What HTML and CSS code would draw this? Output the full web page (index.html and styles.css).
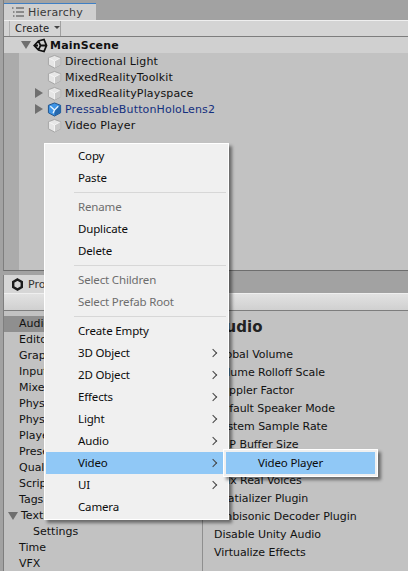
FILE: index.html
```html
<!DOCTYPE html>
<html lang="en">
<head>
    <meta charset="UTF-8">
    <title>Unity Editor Menu</title>
    <link rel="stylesheet" href="styles.css">
</head>
<body>
    <svg class="defs" width="0" height="0">
        <symbol id="cube" viewBox="0 0 16 16">
            <path d="M8 1.500 14.500 4v7.500L8 15 1.500 11.500V4z" fill="#e6e6e6" stroke="#a3a3a3"/>
            <path d="M8 7.500 14.500 4v7.500L8 15z" fill="#c9c9c9"/>
            <path d="M2.500 4.500 8 7.500 13.500 4.500M8 7.500V14" fill="none" stroke="#f4f4f4"/>
        </symbol>
        <symbol id="cube-blue" viewBox="0 0 16 16">
            <path d="M8 1 14.500 3.500v8L8 15 1.500 11.500v-8z" fill="#3f95e6" stroke="#1d4f86"/>
            <path d="M8 7.500 14.500 3.500v8L8 15z" fill="#2568ad"/>
            <path d="M3.500 4.500 8 8.500 12 4.500M8 8.500 6.500 12" fill="none" stroke="#e4f2ff" stroke-width="1.500"/>
        </symbol>
    </svg>

    <section class="panel hierarchy">
        <div class="tabs">
            <div class="tab tab-active">
                <svg class="tab-icon" width="12" height="10" viewBox="0 0 12 10">
                    <path d="M0 1h1.500M4 1h8M1 5h1.500M4 5h8M1 9h1.500M4 9h8" stroke="#444" fill="none"/>
                </svg>
                Hierarchy
            </div>
        </div>
        <div class="toolbar">
            <div class="create-btn">Create<span class="caret"></span></div>
        </div>
        <div class="scene-row">
            <span class="fold fold-open"></span>
            <svg class="unity" width="15" height="15" viewBox="0 0 15 15">
                <path d="M1.200 7.500 5.500 3 11 1.500 13.500 7.500 11 13.500 5.500 12zM1.200 7.500H5M5.500 3 7.500 7.500 5.500 12M7.500 7.500H12.500" fill="none" stroke="#111" stroke-width="1.800"/>
            </svg>
            <span>MainScene</span>
        </div>
        <div class="tree">
            <div class="tree-row"><svg class="cube"><use href="#cube"/></svg>Directional Light</div>
            <div class="tree-row"><svg class="cube"><use href="#cube"/></svg>MixedRealityToolkit</div>
            <div class="tree-row"><span class="fold fold-shut"></span><svg class="cube"><use href="#cube"/></svg>MixedRealityPlayspace</div>
            <div class="tree-row prefab"><span class="fold fold-shut"></span><svg class="cube"><use href="#cube-blue"/></svg>PressableButtonHoloLens2</div>
            <div class="tree-row"><svg class="cube"><use href="#cube"/></svg>Video Player</div>
        </div>
    </section>

    <section class="panel settings">
        <div class="tabs">
            <div class="tab tab-project">
                <svg class="gear" width="13" height="13" viewBox="0 0 13 13">
                    <path d="M6.500 1.500 10.800 4v5L6.500 11.500 2.200 9V4z" fill="none" stroke="#1c1c1c" stroke-width="2.400"/>
                </svg>
                Project Settings
            </div>
        </div>
        <div class="toolbar toolbar-light"></div>
        <div class="settings-body">
            <ul class="cats">
                <li class="cat-on">Audio</li>
                <li>Editor</li>
                <li>Graphics</li>
                <li>Input</li>
                <li>Mixed Reality</li>
                <li>Physics</li>
                <li>Physics 2D</li>
                <li>Player</li>
                <li>Preset Manager</li>
                <li>Quality</li>
                <li>Script Execution</li>
                <li>Tags and Layers</li>
                <li class="cat-open"><span class="fold fold-open"></span>TextMesh Pro</li>
                <li class="cat-sub">Settings</li>
                <li>Time</li>
                <li>VFX</li>
            </ul>
            <div class="detail">
                <h2>Audio</h2>
                <ul class="props">
                    <li>Global Volume</li>
                    <li>Volume Rolloff Scale</li>
                    <li>Doppler Factor</li>
                    <li>Default Speaker Mode</li>
                    <li>System Sample Rate</li>
                    <li>DSP Buffer Size</li>
                    <li>Max Virtual Voices</li>
                    <li>Max Real Voices</li>
                    <li>Spatializer Plugin</li>
                    <li>Ambisonic Decoder Plugin</li>
                    <li>Disable Unity Audio</li>
                    <li>Virtualize Effects</li>
                </ul>
            </div>
        </div>
    </section>

    <div class="menu">
        <div class="item">Copy</div>
        <div class="item">Paste</div>
        <div class="sep"></div>
        <div class="item off">Rename</div>
        <div class="item">Duplicate</div>
        <div class="item">Delete</div>
        <div class="sep"></div>
        <div class="item off">Select Children</div>
        <div class="item off">Select Prefab Root</div>
        <div class="sep"></div>
        <div class="item">Create Empty</div>
        <div class="item more">3D Object</div>
        <div class="item more">2D Object</div>
        <div class="item more">Effects</div>
        <div class="item more">Light</div>
        <div class="item more">Audio</div>
        <div class="item more item-on">Video</div>
        <div class="item more">UI</div>
        <div class="item">Camera</div>
    </div>

    <div class="submenu">
        <div class="sub-item">Video Player</div>
    </div>
</body>
</html>
```

FILE: styles.css
```css
* {
    box-sizing: border-box;
}
html, body {
    height: 100%;
}
body {
    margin: 0;
    width: 408px;
    height: 571px;
    overflow: hidden;
    position: relative;
    background: #a2a2a2;
    font-family: "DejaVu Sans", sans-serif;
    font-size: 11px;
    color: #111;
    padding-left: 3px;
    display: flex;
    flex-direction: column;
}
.defs {
    position: absolute;
}
ul {
    list-style: none;
    margin: 0;
    padding: 0;
}
.panel {
    border-left: 1px solid #7e7e7e;
}
.hierarchy {
    height: 271px;
    border-bottom: 1px solid #6e6e6e;
    flex: none;
    display: flex;
    flex-direction: column;
}
.settings {
    margin-top: 4px;
    flex: 1;
    display: flex;
    flex-direction: column;
    min-height: 0;
}
.tabs {
    display: flex;
    flex: none;
    background: #a2a2a2;
}
.tab {
    display: flex;
    align-items: center;
    gap: 4px;
    background: #cfcfcf;
    color: #3a3a3a;
    white-space: nowrap;
    overflow: hidden;
}
.tab svg {
    flex: none;
}
.tab-active {
    width: 92px;
    height: 17px;
    margin-top: 3px;
    padding-left: 8px;
    border-top: 1px solid #3f7fc4;
    letter-spacing: 0.2px;
}
.tab-project {
    width: 90px;
    height: 18px;
    padding-left: 7px;
    color: #333;
    background: #d6d6d6;
}
.toolbar {
    height: 17px;
    flex: none;
    background: #d4d4d4;
    border-top: 1px solid #efefef;
    border-bottom: 1px solid #7d7d7d;
    display: flex;
}
.toolbar-light {
    height: 18px;
    background: linear-gradient(#e2e2e2, #d0d0d0);
}
.create-btn {
    width: 52px;
    margin-left: 5px;
    padding-left: 5px;
    border-left: 1px solid #b0b0b0;
    border-right: 1px solid #a0a0a0;
    line-height: 15px;
    font-size: 10px;
    letter-spacing: 0.2px;
    color: #222;
    display: flex;
    align-items: center;
}
.caret {
    margin: -3px 0 0 5px;
    border: 3px solid transparent;
    border-top: 3px solid #444;
    border-bottom: 0;
}
.scene-row {
    height: 16px;
    flex: none;
    display: flex;
    align-items: center;
    background: #d0d0d0;
    padding-left: 17px;
    font-weight: bold;
    letter-spacing: 0.2px;
    color: #111;
}
.unity {
    margin-right: 2px;
}
.fold {
    flex: none;
    display: inline-block;
    border: solid transparent;
}
.fold-open {
    width: 10px;
    margin-right: 3px;
    border-width: 8px 5px 0;
    border-top-color: #6f6f6f;
}
.scene-row .fold-open {
    margin-right: 2px;
}
.fold-shut {
    position: absolute;
    margin-left: -12px;
    border-width: 5px 0 5px 8px;
    border-left-color: #6f6f6f;
}
.tree {
    flex: 1;
    padding-left: 43px;
    background: linear-gradient(90deg, #ababab 15px, #c2c2c2 15px);
}
.tree-row {
    height: 16px;
    display: flex;
    align-items: center;
    gap: 3px;
    letter-spacing: 0.15px;
}
.cube {
    width: 15px;
    height: 15px;
    flex: none;
}
.prefab {
    color: #14307f;
}
.settings-body {
    flex: 1;
    display: flex;
    background: #c2c2c2;
    min-height: 0;
    padding-top: 5px;
}
.cats {
    width: 199px;
    flex: none;
    border-right: 1px solid #8f8f8f;
}
.cats li {
    height: 16px;
    line-height: 16px;
    padding-left: 15px;
    white-space: nowrap;
}
.cats .cat-on {
    background: #8f8f8f;
}
.cats .cat-open {
    padding-left: 4px;
    display: flex;
    align-items: center;
}
.cats .cat-sub {
    padding-left: 29px;
}
.detail {
    flex: 1;
    padding-left: 11px;
    min-width: 0;
}
h2 {
    margin: 1px 0 9px;
    font-size: 15px;
    line-height: 20px;
    font-weight: bold;
    color: #222;
}
.props {
    letter-spacing: -0.05px;
}
.props li {
    height: 18px;
    line-height: 18px;
    white-space: nowrap;
}
.menu {
    position: absolute;
    left: 44px;
    top: 143px;
    width: 185px;
    padding: 1px;
    background: #f0f0f0;
    border: 1px solid #fff;
    box-shadow: 3px 3px 3px rgba(0, 0, 0, 0.45);
    font-family: "Noto Sans", sans-serif;
    font-size: 11.500px;
    letter-spacing: -0.15px;
    color: #0c0c0c;
}
.item {
    height: 22px;
    line-height: 22px;
    padding-left: 32px;
    position: relative;
}
.off {
    color: #6d6d6d;
}
.more::after {
    content: "";
    position: absolute;
    left: 164px;
    top: 8px;
    width: 5px;
    height: 5px;
    border-top: 1px solid #444;
    border-right: 1px solid #444;
    transform: rotate(45deg);
}
.item-on {
    background: #90c8f6;
}
.sep {
    height: 1px;
    margin: 3px 1px 3px 28px;
    background: #d7d7d7;
}
.submenu {
    position: absolute;
    left: 223px;
    top: 449px;
    width: 155px;
    height: 28px;
    padding: 2px;
    background: #f0f0f0;
    border: 1px solid #fff;
    box-shadow: 3px 3px 3px rgba(0, 0, 0, 0.45);
    font-family: "Noto Sans", sans-serif;
    font-size: 11.500px;
    letter-spacing: -0.15px;
}
.sub-item {
    height: 22px;
    line-height: 22px;
    padding-left: 32px;
    background: #90c8f6;
    color: #0c0c0c;
}
```
